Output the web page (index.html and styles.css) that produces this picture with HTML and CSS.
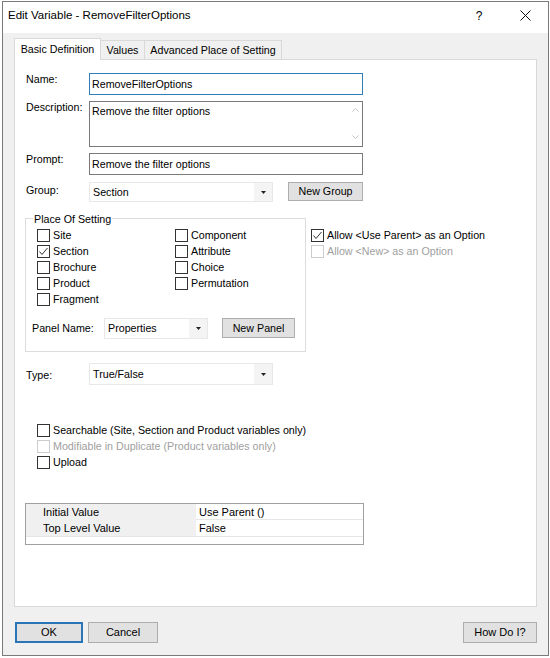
FILE: index.html
```html
<!DOCTYPE html>
<html>
<head>
<meta charset="utf-8">
<title>Edit Variable</title>
<link rel="stylesheet" href="styles.css">
</head>
<body>
<div class="window">
  <div class="titlebar">
    <span class="title">Edit Variable - RemoveFilterOptions</span>
    <span class="tb-btn help">?</span>
    <span class="tb-btn close"><svg width="11" height="11" viewBox="0 0 11 11"><path d="M0.5 0.5 L10.5 10.5 M10.5 0.5 L0.5 10.5" stroke="#111" stroke-width="1" fill="none"/></svg></span>
  </div>
  <div class="client">
    <div class="tabs">
      <div class="tab active">Basic Definition</div>
      <div class="tab t-values">Values</div>
      <div class="tab t-adv">Advanced Place of Setting</div>
    </div>
    <div class="panel">
      <div class="row">
        <span class="lbl">Name:</span>
        <div class="input focus">RemoveFilterOptions</div>
      </div>
      <div class="row r-desc">
        <span class="lbl">Description:</span>
        <div class="textarea">
          <div class="ta-text">Remove the filter options</div>
          <div class="ta-scroll">
            <svg width="7" height="4" viewBox="0 0 7 4"><path d="M0.5 3.5 L3.5 0.5 L6.5 3.5" stroke="#c3c3c3" fill="none"/></svg>
            <svg width="7" height="4" viewBox="0 0 7 4"><path d="M0.5 0.5 L3.5 3.5 L6.5 0.5" stroke="#c3c3c3" fill="none"/></svg>
          </div>
        </div>
      </div>
      <div class="row r-prompt">
        <span class="lbl">Prompt:</span>
        <div class="input">Remove the filter options</div>
      </div>
      <div class="row r-group">
        <span class="lbl lbl-combo">Group:</span>
        <div class="combo c-wide c-group"><span class="cv">Section</span><span class="arrow"><svg width="5" height="3" viewBox="0 0 5 3"><path d="M0 0 H5 L2.5 3 Z" fill="#222"/></svg></span></div>
        <div class="btn b-newgroup">New Group</div>
      </div>
      <div class="pos-row">
        <div class="groupbox">
          <div class="gb-title">Place Of Setting</div>
          <div class="cb-grid">
            <div class="cb"><span class="box"></span><span>Site</span></div>
            <div class="cb"><span class="box"><svg width="11" height="11" viewBox="0 0 11 11"><path d="M1.5 5.5 L4 8.5 L9.5 2" stroke="#333" stroke-width="1" fill="none"/></svg></span><span>Section</span></div>
            <div class="cb"><span class="box"></span><span>Brochure</span></div>
            <div class="cb"><span class="box"></span><span>Product</span></div>
            <div class="cb"><span class="box"></span><span>Fragment</span></div>
            <div class="cb"><span class="box"></span><span>Component</span></div>
            <div class="cb"><span class="box"></span><span>Attribute</span></div>
            <div class="cb"><span class="box"></span><span>Choice</span></div>
            <div class="cb"><span class="box"></span><span>Permutation</span></div>
          </div>
          <div class="row r-panel">
            <span class="lbl lbl-panel">Panel Name:</span>
            <div class="combo c-panel"><span class="cv">Properties</span><span class="arrow"><svg width="5" height="3" viewBox="0 0 5 3"><path d="M0 0 H5 L2.5 3 Z" fill="#222"/></svg></span></div>
            <div class="btn b-newpanel">New Panel</div>
          </div>
        </div>
        <div class="allow">
          <div class="cb"><span class="box"><svg width="11" height="11" viewBox="0 0 11 11"><path d="M1.5 5.5 L4 8.5 L9.5 2" stroke="#333" stroke-width="1" fill="none"/></svg></span><span>Allow &lt;Use Parent&gt; as an Option</span></div>
          <div class="cb disabled"><span class="box"></span><span>Allow &lt;New&gt; as an Option</span></div>
        </div>
      </div>
      <div class="row r-type">
        <span class="lbl lbl-type">Type:</span>
        <div class="combo c-wide c-type"><span class="cv">True/False</span><span class="arrow"><svg width="5" height="3" viewBox="0 0 5 3"><path d="M0 0 H5 L2.5 3 Z" fill="#222"/></svg></span></div>
      </div>
      <div class="opts">
        <div class="cb"><span class="box"></span><span>Searchable (Site, Section and Product variables only)</span></div>
        <div class="cb disabled"><span class="box"></span><span>Modifiable in Duplicate (Product variables only)</span></div>
        <div class="cb"><span class="box"></span><span>Upload</span></div>
      </div>
      <div class="grid">
        <div class="grow"><div class="gk">Initial Value</div><div class="gv">Use Parent ()</div></div>
        <div class="grow g-last"><div class="gk">Top Level Value</div><div class="gv">False</div></div>
      </div>
    </div>
    <div class="buttons">
      <div class="btn b-ok">OK</div>
      <div class="btn b-cancel">Cancel</div>
      <div class="btn b-how">How Do I?</div>
    </div>
  </div>
</div>
</body>
</html>
```
FILE: styles.css
```css
body {
  margin: 0;
  background: #ffffff;
  font-family: "Liberation Sans", Arial, sans-serif;
  font-size: 10.7px;
  color: #000;
}

.window {
  margin: 1px 0 0 2px;
  width: 545px;
  height: 653px;
  border: 1px solid #7a7a7a;
  display: flex;
  flex-direction: column;
}

.titlebar {
  height: 31px;
  flex: none;
  background: #fff;
  display: flex;
  align-items: flex-start;
}

.title {
  flex: 1;
  padding: 6px 0 0 5px;
  line-height: 15px;
  font-size: 11.5px;
}

.tb-btn {
  width: 46px;
  height: 27px;
  display: flex;
  align-items: center;
  justify-content: center;
  font-size: 12px;
}

.client {
  flex: 1;
  background: #f0f0f0;
  padding: 5px 0 0 11px;
}

.tabs {
  display: flex;
  align-items: flex-end;
  height: 21px;
}

.tab {
  height: 19px;
  box-sizing: border-box;
  border: 1px solid #d9d9d9;
  border-bottom: none;
  background: #f0f0f0;
  display: flex;
  align-items: center;
  justify-content: center;
  line-height: 13px;
  white-space: nowrap;
}

.tab.active {
  width: 87px;
  height: 22px;
  margin-bottom: -1px;
  background: #fff;
  position: relative;
  z-index: 1;
}

.t-values {
  width: 44px;
  border-left: none;
}

.t-adv {
  width: 137px;
  border-left: none;
}

.panel {
  width: 523px;
  height: 548px;
  box-sizing: border-box;
  border: 1px solid #d9d9d9;
  background: #fff;
  padding: 13px 0 0 11px;
}

.row {
  display: flex;
  align-items: flex-start;
}

.lbl {
  width: 63px;
  flex: none;
  line-height: 13px;
}

.input {
  width: 274px;
  height: 22px;
  box-sizing: border-box;
  border: 1px solid #7a7a7a;
  padding-left: 2px;
  line-height: 20px;
  white-space: nowrap;
}

.input.focus {
  border-color: #2f7db9;
}

.r-desc,
.r-prompt {
  margin-top: 6px;
}

.textarea {
  width: 274px;
  height: 46px;
  box-sizing: border-box;
  border: 1px solid #7a7a7a;
  display: flex;
}

.ta-text {
  flex: 1;
  padding: 3px 0 0 2px;
  line-height: 13px;
}

.ta-scroll {
  width: 13px;
  display: flex;
  flex-direction: column;
  justify-content: space-between;
  align-items: center;
  padding: 6px 0 7px;
}

.r-group {
  margin-top: 7px;
}

.lbl-combo {
  padding-top: 2px;
}

.combo {
  height: 22px;
  box-sizing: border-box;
  border: 1px solid #e8e8e8;
  background: #fff;
  display: flex;
  align-items: stretch;
}

.c-wide {
  width: 184px;
}

.c-group {
  height: 20px;
}

.cv {
  flex: 1;
  padding-left: 3px;
  display: flex;
  align-items: center;
  line-height: 13px;
}

.arrow {
  width: 18px;
  background: #f4f4f4;
  display: flex;
  align-items: center;
  justify-content: center;
}

.btn {
  box-sizing: border-box;
  border: 1px solid #adadad;
  background: #e1e1e1;
  display: flex;
  align-items: center;
  justify-content: center;
  line-height: 13px;
  white-space: nowrap;
}

.b-newgroup {
  margin-left: 15px;
  width: 75px;
  height: 19px;
}

.pos-row {
  display: flex;
  align-items: flex-start;
  margin: 16px 0 0 -1px;
}

.groupbox {
  width: 281px;
  box-sizing: border-box;
  border: 1px solid #dcdcdc;
  padding: 0 0 12px 6px;
  line-height: 13px;
}

.gb-title {
  width: max-content;
  margin: -6px 0 0 1px;
  padding: 0 1px;
  background: #fff;
}

.cb-grid {
  margin: 1px 0 0 5px;
  display: grid;
  grid-template-columns: 138px auto;
  grid-template-rows: repeat(5, 16px);
  grid-auto-flow: column;
}

.cb {
  height: 16px;
  display: flex;
  align-items: center;
  white-space: nowrap;
  line-height: 13px;
}

.box {
  width: 13px;
  height: 13px;
  box-sizing: border-box;
  border: 1px solid #333;
  background: #fff;
  margin-right: 3px;
  flex: none;
  display: flex;
  align-items: center;
  justify-content: center;
}

.cb.disabled {
  color: #a0a0a0;
}

.cb.disabled .box {
  border-color: #cccccc;
}

.r-panel {
  margin-top: 11px;
}

.lbl-panel {
  width: 72px;
  padding-top: 4px;
}

.c-panel {
  width: 104px;
  height: 21px;
}

.b-newpanel {
  margin-left: 14px;
  width: 73px;
  height: 20px;
}

.allow {
  margin-left: 5px;
  padding-top: 9px;
}

.r-type {
  margin-top: 11px;
}

.lbl-type {
  padding-top: 6px;
}

.opts {
  margin: 37px 0 0 11px;
}

.grid {
  margin: 33px 0 0 -1px;
  width: 339px;
  height: 42px;
  box-sizing: border-box;
  border: 1px solid #a0a0a0;
  font-size: 11px;
}

.grow {
  display: flex;
  height: 16px;
  line-height: 16px;
}

.gk {
  width: 170px;
  background: #f0f0f0;
  padding-left: 17px;
  box-sizing: border-box;
}

.gv {
  flex: 1;
  padding-left: 3px;
  border-bottom: 1px solid #e6e6e6;
  box-sizing: border-box;
}

.g-last {
  border-bottom: 1px solid #e6e6e6;
}

.g-last .gv {
  border-bottom: none;
}

.buttons {
  width: 523px;
  margin-top: 15px;
  display: flex;
  font-size: 11px;
}

.b-ok {
  margin-left: 1px;
  width: 68px;
  height: 21px;
  border: 2px solid #2a74b8;
}

.b-cancel {
  margin-left: 5px;
  width: 70px;
  height: 21px;
}

.b-how {
  margin-left: auto;
  width: 74px;
  height: 21px;
}
```
